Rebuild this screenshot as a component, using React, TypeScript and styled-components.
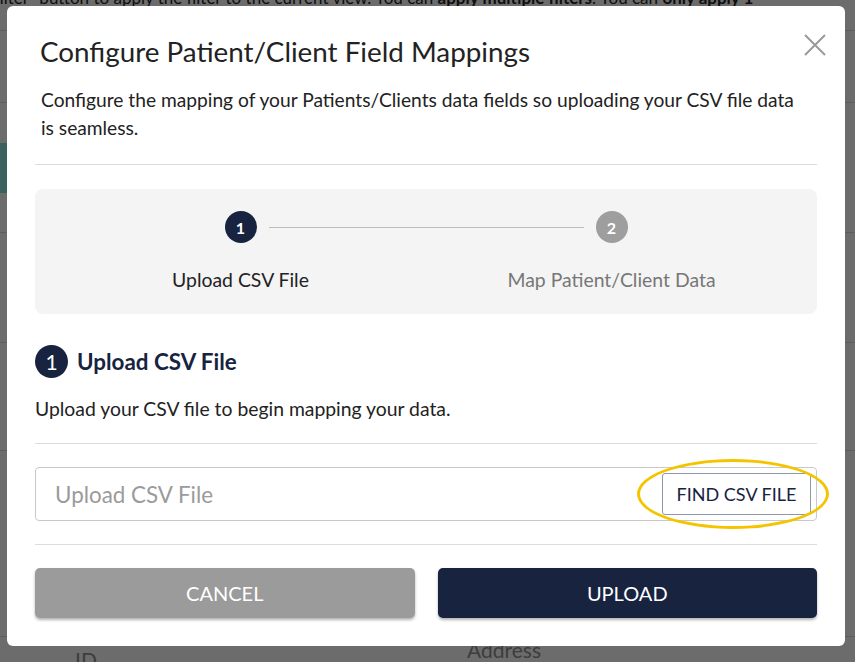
import styled, { createGlobalStyle } from "styled-components";

const GlobalStyle = createGlobalStyle`
  html, body {
    margin: 0;
    padding: 0;
    background: #efefef;
    font-family: Lato, "Noto Sans", sans-serif;
    overflow: hidden;
  }
  * { box-sizing: border-box; }
`;

const NAVY = "#17233f";

/* ---------- page behind the dialog ---------- */

const Page = styled("main")`
  width: 855px;
  height: 662px;
  overflow: hidden;
  background: #efefef;
  color: #222;
`;

const Intro = styled("p")`
  margin: -12px 0 0 -6px;
  font-size: 17px;
  line-height: 20px;
  white-space: nowrap;
  b { font-weight: 700; }
`;

const PageRow = styled("div")<{ $h: number }>`
  height: ${(p) => p.$h}px;
  border-bottom: 1px solid #cfcfcf;
  display: flex;
  align-items: center;
`;

const TealButton = styled("div")`
  width: 90px;
  height: 50px;
  margin-left: -70px;
  background: #86d6cf;
`;

const HeaderCells = styled("div")`
  display: grid;
  grid-template-columns: 392px 1fr;
  padding: 0 0 0 75px;
  align-items: start;
  font-size: 21px;
  line-height: 26px;
  color: #888;
`;

const HeaderCell = styled("span")<{ $shift?: number }>`
  transform: translateY(${(p) => p.$shift ?? 0}px);
`;

/* ---------- dialog ---------- */

const Backdrop = styled("div")`
  position: fixed;
  inset: 0;
  background: rgba(0, 0, 0, 0.55);
  display: flex;
  align-items: flex-start;
  justify-content: flex-start;
  padding: 6px 0 0 7px;
`;

const Modal = styled("section")`
  position: relative;
  width: 838px;
  height: 640px;
  background: #fff;
  border-radius: 6px;
  padding: 30px 28px 28px;
  display: flex;
  flex-direction: column;
`;

const CloseButton = styled("button")`
  position: absolute;
  top: 26px;
  right: 17px;
  width: 26px;
  height: 26px;
  padding: 0;
  border: 0;
  background: none;
  cursor: pointer;
  display: flex;
  align-items: center;
  justify-content: center;
`;

const Title = styled("h2")`
  margin: 0 0 0 5px;
  font-size: 27.8px;
  line-height: 32px;
  font-weight: 400;
  color: #222;
`;

const Lead = styled("p")`
  margin: 18px 0 0 6px;
  max-width: 764px;
  font-size: 19.2px;
  line-height: 28px;
  color: #222;
`;

const Rule = styled("hr")<{ $top: number }>`
  margin: ${(p) => p.$top}px 0 0;
  border: 0;
  border-top: 1px solid #dcdcdc;
`;

const StepPanel = styled("div")`
  margin-top: 24px;
  background: #f4f4f4;
  border-radius: 8px;
  padding: 22px 20px 21px;
  display: grid;
  grid-template-columns: 1fr 1fr;
`;

const Step = styled("div")<{ $first?: boolean }>`
  position: relative;
  display: flex;
  flex-direction: column;
  align-items: center;

  ${(p) =>
    !p.$first &&
    `
    &::before {
      content: "";
      position: absolute;
      top: 16px;
      left: calc(-50% + 28px);
      right: calc(50% + 28px);
      border-top: 1px solid #bdbdbd;
    }
  `}
`;

const StepDot = styled("span")<{ $active?: boolean }>`
  width: 32px;
  height: 32px;
  border-radius: 50%;
  background: ${(p) => (p.$active ? NAVY : "#9e9e9e")};
  color: #fff;
  font-size: 16px;
  font-weight: 700;
  display: flex;
  align-items: center;
  justify-content: center;
`;

const StepLabel = styled("span")<{ $active?: boolean }>`
  margin-top: 24px;
  font-size: 19.4px;
  line-height: 26px;
  color: ${(p) => (p.$active ? "#222" : "#777")};
`;

const SectionHead = styled("h3")`
  margin: 31px 0 0;
  display: flex;
  align-items: center;
  gap: 9px;
  font-size: 22.4px;
  line-height: 33px;
  font-weight: 700;
  color: ${NAVY};
`;

const SectionDot = styled("span")`
  width: 33px;
  height: 33px;
  border-radius: 50%;
  background: ${NAVY};
  color: #fff;
  font-size: 21px;
  font-weight: 400;
  display: flex;
  align-items: center;
  justify-content: center;
`;

const SectionText = styled("p")`
  margin: 17px 0 0;
  font-size: 19.35px;
  line-height: 28px;
  color: #222;
`;

const FileField = styled("div")`
  position: relative;
  margin-top: 23px;
  height: 56px;
  border: 1px solid #c9c9c9;
  border-radius: 4px;
  display: flex;
  align-items: center;
  padding: 0 5px 0 19px;
`;

const Placeholder = styled("span")`
  flex: 1;
  font-size: 22.4px;
  color: #9b9b9b;
`;

const FindButton = styled("button")`
  width: 149px;
  height: 42px;
  border: 1px solid #8e98a9;
  border-radius: 3px;
  background: #fff;
  font-family: inherit;
  font-size: 18px;
  color: ${NAVY};
  cursor: pointer;
`;

const Highlight = styled("span")`
  position: absolute;
  right: -13px;
  top: -9px;
  width: 192px;
  height: 70px;
  border: 3px solid #f4c400;
  border-radius: 50%;
  pointer-events: none;
`;

const Actions = styled("div")`
  margin-top: 23px;
  display: grid;
  grid-template-columns: 1fr 1fr;
  gap: 23px;
`;

const ActionButton = styled("button")<{ $primary?: boolean }>`
  height: 50px;
  border: 0;
  border-radius: 5px;
  background: ${(p) => (p.$primary ? NAVY : "#9b9b9b")};
  box-shadow: 0 2px 3px rgba(0, 0, 0, 0.3);
  color: #fff;
  font-family: inherit;
  font-size: 20px;
  cursor: pointer;
`;

const steps = [
  { n: 1, label: "Upload CSV File", active: true },
  { n: 2, label: "Map Patient/Client Data", active: false },
];

export default function App() {
  return (
    <>
      <GlobalStyle />
      <Page>
        <Intro>
          filter” button to apply the filter to the current view. You can{" "}
          <b>apply multiple filters</b>. You can <b>only apply 1</b>
        </Intro>
        <PageRow $h={23} />
        <PageRow $h={72} />
        <PageRow $h={130}>
          <TealButton />
        </PageRow>
        <PageRow $h={110} />
        <PageRow $h={108} />
        <PageRow $h={186} />
        <HeaderCells>
          <HeaderCell $shift={10}>ID</HeaderCell>
          <HeaderCell>Address</HeaderCell>
        </HeaderCells>
      </Page>

      <Backdrop>
        <Modal role="dialog" aria-modal="true">
          <CloseButton aria-label="Close">
            <svg width="22" height="22" viewBox="0 0 22 22">
              <path
                d="M1 1 L21 21 M21 1 L1 21"
                stroke="#9a9a9a"
                strokeWidth="2"
                fill="none"
              />
            </svg>
          </CloseButton>

          <Title>Configure Patient/Client Field Mappings</Title>
          <Lead>
            Configure the mapping of your Patients/Clients data fields so
            uploading your CSV file data is seamless.
          </Lead>
          <Rule $top={22} />

          <StepPanel>
            {steps.map((s, i) => (
              <Step key={s.n} $first={i === 0}>
                <StepDot $active={s.active}>{s.n}</StepDot>
                <StepLabel $active={s.active}>{s.label}</StepLabel>
              </Step>
            ))}
          </StepPanel>

          <SectionHead>
            <SectionDot>1</SectionDot>
            Upload CSV File
          </SectionHead>
          <SectionText>Upload your CSV file to begin mapping your data.</SectionText>
          <Rule $top={20} />

          <FileField>
            <Placeholder>Upload CSV File</Placeholder>
            <FindButton>FIND CSV FILE</FindButton>
            <Highlight />
          </FileField>
          <Rule $top={23} />

          <Actions>
            <ActionButton>CANCEL</ActionButton>
            <ActionButton $primary>UPLOAD</ActionButton>
          </Actions>
        </Modal>
      </Backdrop>
    </>
  );
}
